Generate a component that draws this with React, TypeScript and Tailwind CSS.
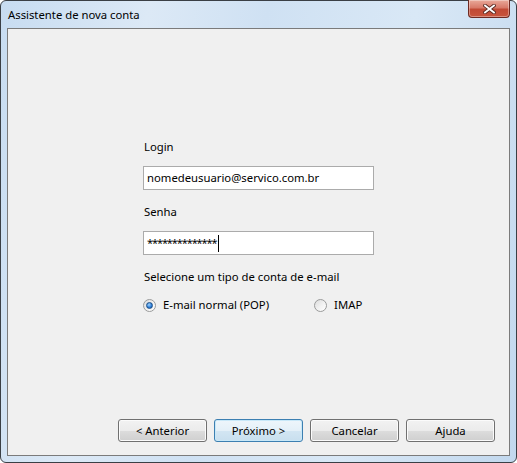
import { useState } from 'react'

const font = { fontFamily: '"Noto Sans", "Segoe UI", sans-serif' }

function Radio({ checked, label, onClick }: { checked: boolean; label: string; onClick: () => void }) {
  return (
    <button type="button" onClick={onClick} className="flex items-center gap-[7px] h-[16px]">
      <span className="w-[13px] h-[13px] rounded-full border border-[#9a9b9b] bg-[linear-gradient(135deg,#dcdcdc,#f2f2f2_55%,#ffffff)] flex items-center justify-center">
        {checked && (
          <span className="w-[7px] h-[7px] rounded-full border border-[#1c4f86] bg-[radial-gradient(circle_at_40%_35%,#9fd4ff,#2a7ad5_60%,#1a5aa8)]" />
        )}
      </span>
      <span className="text-[11.3px] leading-[16px] text-black">{label}</span>
    </button>
  )
}

function WinButton({ label, isDefault }: { label: string; isDefault?: boolean }) {
  return (
    <button
      type="button"
      className={
        isDefault
          ? 'w-[89px] h-[23px] rounded-[3px] border border-[#3c7fb1] shadow-[inset_0_0_0_1px_#c8e8f8] bg-[linear-gradient(to_bottom,#eef6fb_0%,#e4f0f8_50%,#d3e6f3_50%,#c8dfee_100%)] text-[11.3px] leading-[16px] text-black'
          : 'w-[89px] h-[23px] rounded-[3px] border border-[#707070] shadow-[inset_0_0_0_1px_#fbfbfb] bg-[linear-gradient(to_bottom,#f2f2f2_0%,#ebebeb_50%,#dddddd_50%,#cfcfcf_100%)] text-[11.3px] leading-[16px] text-black'
      }
    >
      {label}
    </button>
  )
}

export default function App() {
  const [type, setType] = useState<'pop' | 'imap'>('pop')

  return (
    <div style={font} className="w-[517px] h-[463px]">
      <div className="relative w-[517px] h-[463px] flex flex-col border border-[#3a3f45] rounded-[6px] bg-[linear-gradient(100deg,#c7dcf1_0%,#dce9f6_25%,#cfe1f3_45%,#d9e8f6_70%,#c2d8ee_100%)]">
        {/* title bar */}
        <div className="h-[27px] flex items-center pl-[7px]">
          <span className="text-[11.3px] leading-[16px] text-black">Assistente de nova conta</span>
        </div>

        {/* close button */}
        <div className="absolute top-[-1px] right-[6px] w-[42px] h-[18px] rounded-b-[4px] border border-[#6e2a22] border-t-0 bg-[linear-gradient(to_bottom,#e9a99a_0%,#d87a69_45%,#c14a35_55%,#c8553d_100%)] flex items-center justify-center shadow-[inset_0_0_0_1px_rgba(255,255,255,0.35)]">
          <svg width="13" height="10" viewBox="0 0 13 10">
            <path d="M2 1.5 L11 8.5 M11 1.5 L2 8.5" stroke="#5a2a22" strokeWidth="3.6" strokeLinecap="square" />
            <path d="M2 1.5 L11 8.5 M11 1.5 L2 8.5" stroke="#ffffff" strokeWidth="1.8" strokeLinecap="square" />
          </svg>
        </div>

        {/* client area */}
        <div className="mx-[6px] h-[428px] border border-[#7b7b7b] bg-[#f0f0f0] flex flex-col text-black">
          <div className="pl-[136px] pt-[110px] flex flex-col">
            <span className="text-[11.3px] leading-[16px]">Login</span>
            <div className="mt-[11px] -ml-[1px] w-[231px] h-[24px] border border-[#ababab] bg-white flex items-center pl-[3px]">
              <span className="text-[11.3px] leading-[16px]">nomedeusuario@servico.com.br</span>
            </div>
            <span className="mt-[14px] text-[11.3px] leading-[16px]">Senha</span>
            <div className="mt-[11px] -ml-[1px] w-[231px] h-[24px] border border-[#ababab] bg-white flex items-center pl-[3px]">
              <span className="text-[11px] leading-[16px] tracking-[-1.1px]">**************</span>
              <span className="ml-[2px] w-[1px] h-[17px] bg-black" />
            </div>
            <span className="mt-[14px] text-[11.3px] leading-[16px]">Selecione um tipo de conta de e-mail</span>
            <div className="mt-[12px] -ml-[1px] flex items-center gap-[45px]">
              <Radio checked={type === 'pop'} label="E-mail normal (POP)" onClick={() => setType('pop')} />
              <Radio checked={type === 'imap'} label="IMAP" onClick={() => setType('imap')} />
            </div>
          </div>

          <div className="mt-auto flex justify-end gap-[7px] pr-[14px] pb-[13px]">
            <WinButton label="< Anterior" />
            <WinButton label="Próximo >" isDefault />
            <WinButton label="Cancelar" />
            <WinButton label="Ajuda" />
          </div>
        </div>
      </div>
    </div>
  )
}
